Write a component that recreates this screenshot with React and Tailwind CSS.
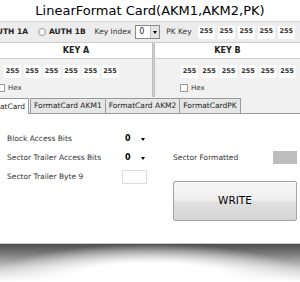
import React from "react";

const F = "font-['DejaVu_Sans',sans-serif]";

function Box({ children = "255", className = "" }) {
  return (
    <div className={`h-[13px] w-[17px] bg-white flex items-center justify-center text-[6.5px] font-bold text-[#333] ${className}`}>
      {children}
    </div>
  );
}

function Check({ label }) {
  return (
    <div className="flex items-center gap-[3px]">
      <div className="h-[8px] w-[8px] border border-[#9a9a9a] bg-white" />
      <span className="text-[7px] text-[#333]">{label}</span>
    </div>
  );
}

function Drop() {
  return (
    <div className="flex items-center w-[26px]">
      <span className="font-bold text-[8px] text-black ml-[3px]">0</span>
      <div className="ml-[10px] w-0 h-0 border-l-[2.5px] border-r-[2.5px] border-t-[3px] border-l-transparent border-r-transparent border-t-black" />
    </div>
  );
}

export default function App() {
  const six = [0, 1, 2, 3, 4, 5];
  return (
    <div className={`relative h-[282px] w-[300px] overflow-hidden bg-white ${F} text-[#222]`}>
      <div className="h-[244px] border-b border-[#c8c8c8] bg-white flex flex-col">
        {/* Title */}
        <div className="h-[22px] flex items-center justify-center text-[13px] text-black border-b border-[#d6d6d6]">
          LinearFormat Card(AKM1,AKM2,PK)
        </div>
        {/* Auth row */}
        <div className="h-[21px] bg-[#ececec] flex items-center text-[7.5px] whitespace-nowrap border-b border-[#cfcfcf]">
          <div className="w-[28px] overflow-hidden flex justify-end shrink-0">
            <span className="font-bold">AUTH 1A</span>
          </div>
          <div className="ml-[10px] h-[8px] w-[8px] rounded-full border border-[#9a9a9a] bg-[#f4f4f4]" />
          <span className="font-bold ml-[3px]">AUTH 1B</span>
          <span className="ml-[9px] text-[#333]">Key Index</span>
          <div className="ml-[4px] h-[14px] w-[25px] border border-[#8a8a8a] bg-white flex items-center">
            <span className="ml-[3px] text-[8px] flex-1">0</span>
            <div className="h-full w-[9px] bg-[#e4e4e4] border-l border-[#bdbdbd] flex items-center justify-center">
              <div className="w-0 h-0 border-l-[2.5px] border-r-[2.5px] border-t-[3px] border-l-transparent border-r-transparent border-t-black" />
            </div>
          </div>
          <span className="ml-[6px] text-[#333]">PK Key</span>
          <div className="ml-[6px] flex gap-[3px]">
            {[0, 1, 2, 3, 4].map((i) => (
              <Box key={i} />
            ))}
          </div>
        </div>
        {/* Keys */}
        <div className="flex h-[54px]">
          <div className="w-[152px] flex flex-col">
            <div className="h-[16px] bg-white border-b border-[#cfcfcf] flex items-center justify-center text-[8px] font-bold">
              KEY A
            </div>
            <div className="flex-1 bg-[#f1f1f1] flex flex-col pl-[4px] pt-[6px] gap-[5px]">
              <div className="flex gap-[2.5px]">
                {six.map((i) => (
                  <Box key={i} />
                ))}
              </div>
              <div className="-ml-[7px]">
                <Check label="Hex" />
              </div>
            </div>
          </div>
          <div className="w-[3px] bg-[#d2d2d2] border-x border-[#bdbdbd]" />
          <div className="flex-1 flex flex-col">
            <div className="h-[16px] bg-white border-b border-[#cfcfcf] flex items-center justify-center text-[8px] font-bold">
              KEY B
            </div>
            <div className="flex-1 bg-[#f1f1f1] flex flex-col pl-[26px] pt-[6px] gap-[5px]">
              <div className="flex gap-[2.5px]">
                {six.map((i) => (
                  <Box key={i} />
                ))}
              </div>
              <div className="-ml-[1px]">
                <Check label="Hex" />
              </div>
            </div>
          </div>
        </div>
        {/* Tabs */}
        <div className="h-[17px] bg-[#f1f1f1] flex items-end border-b border-[#9a9a9a] text-[7.5px] whitespace-nowrap">
          <div className="h-[16px] w-[29px] shrink-0 overflow-hidden pr-[3px] bg-white border-r border-t border-[#9a9a9a] flex items-center justify-end -mb-px">
            <span>FormatCard</span>
          </div>
          <div className="h-[15px] ml-[1px] px-[3px] bg-[#e6e6e6] border border-b-0 border-[#9a9a9a] flex items-center">
            FormatCard AKM1
          </div>
          <div className="h-[15px] px-[3px] bg-[#e6e6e6] border border-b-0 border-l-0 border-[#9a9a9a] flex items-center">
            FormatCard AKM2
          </div>
          <div className="h-[15px] px-[3px] bg-[#e6e6e6] border border-b-0 border-l-0 border-[#9a9a9a] flex items-center">
            FormatCardPK
          </div>
        </div>
        {/* Content */}
        <div className="flex-1 bg-white flex text-[7.5px] text-[#333] pt-[18px]">
          <div className="w-[173px] shrink-0 pl-[7px] flex flex-col gap-[5px]">
            <div className="flex items-center h-[14px]">
              <span className="w-[115px]">Block Access Bits</span>
              <Drop />
            </div>
            <div className="flex items-center h-[14px]">
              <span className="w-[115px]">Sector Trailer Access Bits</span>
              <Drop />
            </div>
            <div className="flex items-center h-[14px]">
              <span className="w-[115px]">Sector Trailer Byte 9</span>
              <div className="h-[14px] w-[25px] border border-[#dcdcdc] bg-white" />
            </div>
          </div>
          <div className="flex-1 pr-[3px] flex flex-col pt-[19px]">
            <div className="flex items-center justify-between h-[13px]">
              <span>Sector Formatted</span>
              <div className="h-[13px] w-[24px] bg-[#bdbdbd]" />
            </div>
            <div className="mt-[17px] h-[40px] rounded-[2px] border border-[#a3a3a3] bg-[linear-gradient(to_bottom,#f7f7f7_0%,#efefef_48%,#e0e0e0_52%,#d6d6d6_100%)] flex items-center justify-center text-[10.5px] text-black">
              WRITE
            </div>
          </div>
        </div>
      </div>
      {/* Shadow */}
      <div className="relative h-[38px] bg-[linear-gradient(to_bottom,#4e4e4e_0%,#7a7a7a_25%,#c8c8c8_62%,#ffffff_100%)]">
        <div className="absolute inset-0 bg-[radial-gradient(ellipse_55%_100%_at_50%_100%,#ffffff_50%,rgba(255,255,255,0)_100%)]" />
      </div>
    </div>
  );
}
